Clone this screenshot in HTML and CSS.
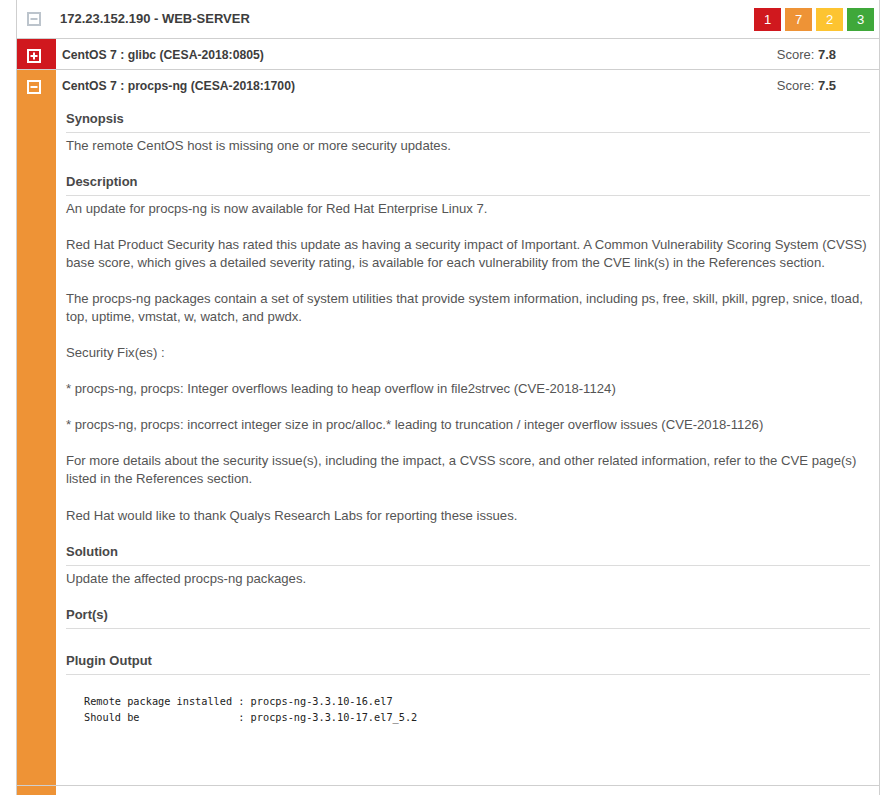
FILE: index.html
```html
<!DOCTYPE html>
<html lang="en">
<head>
<meta charset="utf-8">
<title>172.23.152.190 - WEB-SERVER</title>
<link rel="stylesheet" href="styles.css">
</head>
<body>
<div class="report">
  <div class="host-head">
    <svg class="toggle" width="14" height="14" viewBox="0 0 14 14"><rect x="1" y="1" width="12" height="12" fill="#fff" stroke="#bcc4cc" stroke-width="2"/><line x1="3.5" y1="7" x2="10.5" y2="7" stroke="#bcc4cc" stroke-width="2"/></svg>
    <span class="host-name">172.23.152.190 - WEB-SERVER</span>
    <div class="counts">
      <span class="badge crit">1</span>
      <span class="badge high">7</span>
      <span class="badge med">2</span>
      <span class="badge low">3</span>
    </div>
  </div>

  <div class="vuln crit">
    <div class="sev-bar">
      <svg width="14" height="14" viewBox="0 0 14 14"><rect x="1" y="1" width="12" height="12" fill="none" stroke="#fff" stroke-width="2"/><line x1="3.5" y1="7" x2="10.5" y2="7" stroke="#fff" stroke-width="2"/><line x1="7" y1="3.5" x2="7" y2="10.5" stroke="#fff" stroke-width="2"/></svg>
    </div>
    <div class="vuln-main">
      <div class="vuln-head">
        <span class="vuln-title">CentOS 7 : glibc (CESA-2018:0805)</span>
        <span class="score">Score: <b>7.8</b></span>
      </div>
    </div>
  </div>

  <div class="vuln high">
    <div class="sev-bar">
      <svg width="14" height="14" viewBox="0 0 14 14"><rect x="1" y="1" width="12" height="12" fill="none" stroke="#fff" stroke-width="2"/><line x1="3.5" y1="7" x2="10.5" y2="7" stroke="#fff" stroke-width="2"/></svg>
    </div>
    <div class="vuln-main">
      <div class="vuln-head">
        <span class="vuln-title">CentOS 7 : procps-ng (CESA-2018:1700)</span>
        <span class="score">Score: <b>7.5</b></span>
      </div>
      <div class="details">
        <section class="sect">
          <h3>Synopsis</h3>
          <div class="sect-body">
            <p>The remote CentOS host is missing one or more security updates.</p>
          </div>
        </section>
        <section class="sect">
          <h3>Description</h3>
          <div class="sect-body">
            <p>An update for procps-ng is now available for Red Hat Enterprise Linux 7.</p>
            <p>Red Hat Product Security has rated this update as having a security impact of Important. A Common Vulnerability Scoring System (CVSS)<br>base score, which gives a detailed severity rating, is available for each vulnerability from the CVE link(s) in the References section.</p>
            <p>The procps-ng packages contain a set of system utilities that provide system information, including ps, free, skill, pkill, pgrep, snice, tload,<br>top, uptime, vmstat, w, watch, and pwdx.</p>
            <p>Security Fix(es) :</p>
            <p>* procps-ng, procps: Integer overflows leading to heap overflow in file2strvec (CVE-2018-1124)</p>
            <p>* procps-ng, procps: incorrect integer size in proc/alloc.* leading to truncation / integer overflow issues (CVE-2018-1126)</p>
            <p>For more details about the security issue(s), including the impact, a CVSS score, and other related information, refer to the CVE page(s)<br>listed in the References section.</p>
            <p class="last-para">Red Hat would like to thank Qualys Research Labs for reporting these issues.</p>
          </div>
        </section>
        <section class="sect">
          <h3>Solution</h3>
          <div class="sect-body">
            <p>Update the affected procps-ng packages.</p>
          </div>
        </section>
        <section class="sect">
          <h3>Port(s)</h3>
          <div class="sect-body empty"></div>
        </section>
        <section class="sect">
          <h3>Plugin Output</h3>
          <div class="sect-body">
<pre class="output">Remote package installed : procps-ng-3.3.10-16.el7
Should be                : procps-ng-3.3.10-17.el7_5.2</pre>
          </div>
        </section>
      </div>
    </div>
  </div>

  <div class="vuln high">
    <div class="sev-bar"></div>
    <div class="vuln-main"><div class="vuln-head"></div></div>
  </div>
</div>
</body>
</html>
```

FILE: styles.css
```css
html, body {
  margin: 0;
  padding: 0;
  background: #fff;
}

body {
  font-family: "Liberation Sans", Arial, sans-serif;
  font-size: 13px;
  color: #555;
}

.report {
  margin-left: 16px;
  width: 864px;
  border-left: 1px solid #cfcfcf;
  border-right: 1px solid #cfcfcf;
  box-sizing: border-box;
}

.host-head {
  display: flex;
  align-items: center;
  height: 38px;
  padding: 0 5px 0 10px;
  border-bottom: 1px solid #cfcfcf;
}

.toggle {
  display: block;
  margin-top: -1px;
}

.host-name {
  margin-left: 19px;
  margin-top: -2px;
  font-weight: bold;
  font-size: 13px;
  color: #3d3d3d;
  flex: 1;
}

.counts {
  display: flex;
  gap: 4px;
  margin-top: 1px;
}

.badge {
  width: 27px;
  height: 23px;
  line-height: 23px;
  text-align: center;
  color: #fff;
  font-size: 13px;
}

.badge.crit { background: #d0181e; }
.badge.high { background: #ee9336; }
.badge.med { background: #fdc431; }
.badge.low { background: #3fa83a; }

.vuln {
  display: flex;
  border-bottom: 1px solid #cfcfcf;
}

.sev-bar {
  width: 39px;
  flex: none;
  padding: 10px 0 0 10px;
  box-sizing: border-box;
}

.sev-bar svg { display: block; }

.vuln.crit .sev-bar { background: #d0181e; }
.vuln.high .sev-bar { background: #ee9336; }

.vuln-main {
  flex: 1;
  min-width: 0;
}

.vuln-head {
  display: flex;
  justify-content: space-between;
  align-items: baseline;
  height: 30px;
  box-sizing: border-box;
  padding: 8px 43px 6px 6px;
  line-height: 16px;
}

.vuln-title {
  font-weight: bold;
  font-size: 12.2px;
  color: #3d3d3d;
}

.score {
  font-size: 13px;
  color: #555;
}

.score b {
  color: #3d3d3d;
}

.details {
  padding: 10px 9px 0 10px;
}

.sect + .sect {
  margin-top: 18px;
}

.sect h3 {
  margin: 0;
  font-size: 13px;
  font-weight: bold;
  line-height: 18px;
  color: #484848;
  padding-bottom: 4px;
  border-bottom: 1px solid #dcdcdc;
}

.sect-body {
  margin-top: 4px;
}

.sect-body.empty {
  height: 1px;
}

.sect-body p {
  margin: 0 0 18px;
  line-height: 18px;
  font-size: 13.15px;
  white-space: nowrap;
}

.sect-body p.last-para {
  margin-top: 19px;
}

.sect-body p:last-child {
  margin-bottom: 0;
}

.output {
  margin: 18px 0 0;
  padding: 0 18px 60px;
  font-family: "DejaVu Sans Mono", Consolas, monospace;
  font-size: 10.25px;
  line-height: 16px;
  color: #222;
}
```
